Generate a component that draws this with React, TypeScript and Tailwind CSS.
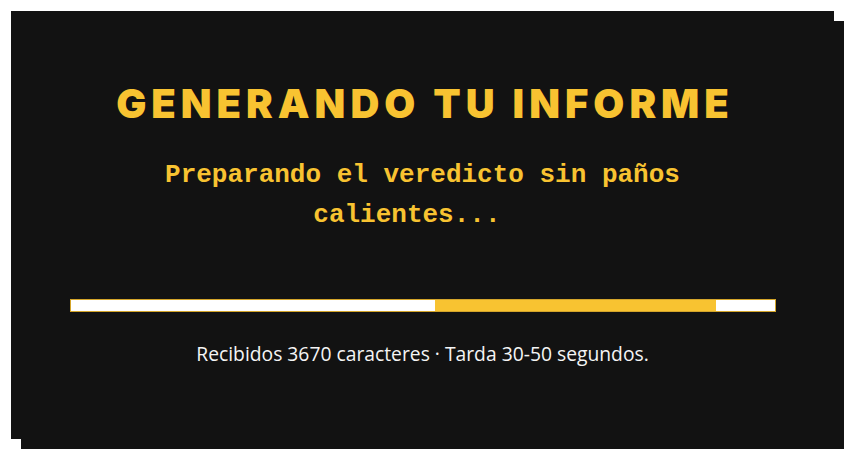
export default function App() {
    return (
        <div className="min-h-screen bg-white pt-[11px] pl-[11px]">
            {/* Loading card with hard offset shadow */}
            <div className="w-[823px] h-[428px] bg-[#121212] shadow-[10px_10px_0_#121212] flex flex-col items-center pt-[73px]">
                <h1
                    className="text-[40px] leading-none font-black tracking-[5px] pl-[5px] text-[#f8c331]"
                    style={{ fontFamily: 'Inter, "Liberation Sans", sans-serif' }}
                >
                    GENERANDO TU INFORME
                </h1>

                <p
                    className="mt-[31px] max-w-[560px] text-center text-[26px] leading-[40px] font-bold text-[#f8c331]"
                    style={{ fontFamily: '"Liberation Mono", monospace' }}
                >
                    Preparando el veredicto sin paños calientes...
                    <span className="inline-block w-[2ch]" />
                </p>

                {/* Indeterminate progress bar */}
                <div className="relative mt-[64px] w-[706px] h-[13px] bg-white border border-[#d4a52a]">
                    <div className="absolute top-0 bottom-0 left-[364px] w-[281px] bg-[#f8c331]" />
                </div>

                <p
                    className="mt-[30px] text-[19.3px] leading-[24px] text-[#f5f5f5]"
                    style={{ fontFamily: '"Open Sans", sans-serif' }}
                >
                    Recibidos 3670 caracteres · Tarda 30-50 segundos.
                </p>
            </div>
        </div>
    );
}
